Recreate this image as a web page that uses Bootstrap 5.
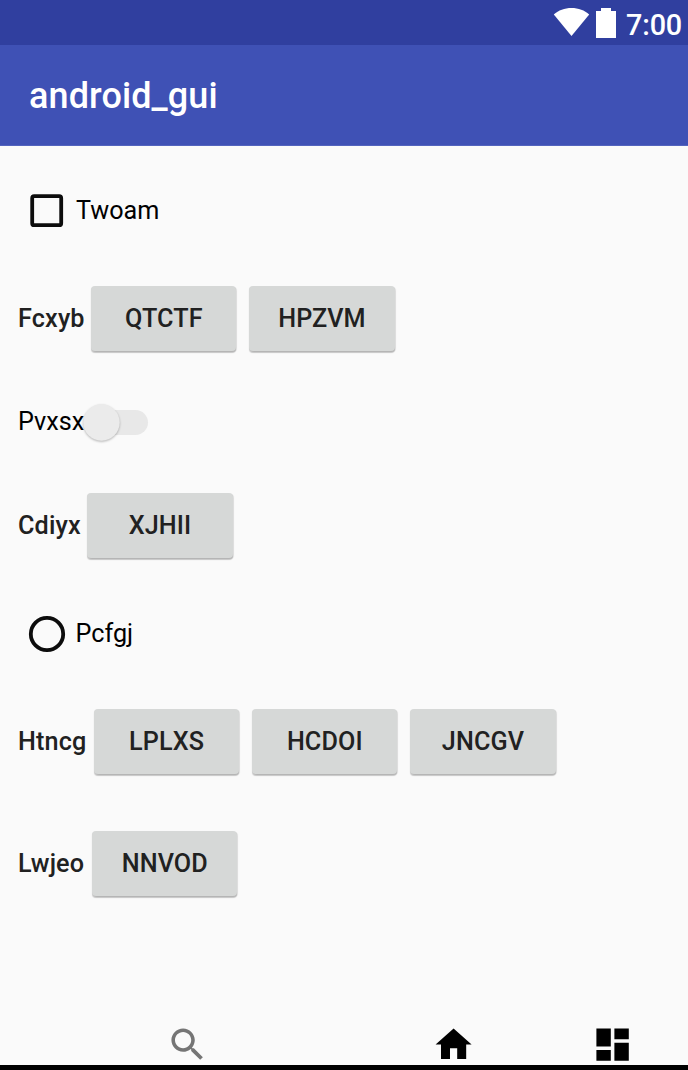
<!DOCTYPE html>
<html lang="en">
<head>
<meta charset="utf-8">
<meta name="viewport" content="width=device-width, initial-scale=1">
<title>android_gui</title>
<link rel="stylesheet" href="https://cdn.jsdelivr.net/npm/bootstrap@5.3.0/dist/css/bootstrap.min.css">
<style>
  body { font-family: Roboto, "Liberation Sans", sans-serif; font-size: 25.2px; line-height: 30px; background: #fafafa; color: #000; height: 1070px; overflow: hidden; }
  .status-bar { height: 45px; background: #303f9f; color: #fff; padding-right: 6px; font-size: 28.8px; font-weight: 500; }
  .clock { line-height: 34px; padding-top: 8px; margin-left: 10px; letter-spacing: -.2px; }
  .toolbar { height: 101px; background: #3f51b5; border-bottom: 1px solid #5364be; padding: 2px 0 0 29px; }
  .toolbar h1 { font-size: 36px; font-weight: 500; line-height: 42px; letter-spacing: .1px; color: #fff; }
  .form-row { padding-left: 18px; height: 88px; }
  .row-check { height: 129px; }
  .row-switch { height: 118px; }
  .row-single { height: 89px; }
  .row-single .btn-raised { padding-top: 1px; margin-bottom: 0; }
  .row-radio { height: 128px; }
  .row-last { margin-top: 34px; }
  .group-label { font-weight: 500; color: #212121; margin-right: 6.500px; letter-spacing: .15px; }
  .row-triple .group-label { margin-right: 7.500px; }
  .row-last .group-label { margin-right: 8px; }
  .btn-raised { width: 145.200px; height: 65px; padding: 0; border: 0; border-radius: 4px; background: #d6d8d7; color: #212121; font-family: inherit; font-size: 25.2px; font-weight: 500; line-height: 30px; letter-spacing: .1px; box-shadow: 0 1.500px 1px rgba(0,0,0,.2), 1px 1px 1px rgba(0,0,0,.1); margin: 0 13px 1px 0; }
  .btn-raised:hover { background: #cccece; color: #212121; }
  .switch-track { width: 65px; height: 37px; margin-left: -1px; }
  .bottom-bar { height: 43px; padding: .500px 0 0 166px; }
  .home-item { margin-left: 223px; }
  .board-item { margin-left: 115.300px; }
  .nav-edge { height: 5px; background: #000; }
  svg { display: block; flex: none; }
</style>
</head>
<body class="d-flex flex-column">
  <header>
    <div class="status-bar d-flex justify-content-end">
      <svg width="64" height="45" viewBox="0 0 64 45" fill="#fff"><path d="M19.500 36L1.800 14.500C6.500 10.200 12.500 8 19.500 8S32.500 10.200 37.200 14.500Z"/><path d="M49 8h10v3h5v27H44V11h5Z"/></svg>
      <span class="clock">7:00</span>
    </div>
    <div class="toolbar d-flex align-items-center"><h1 class="mb-0">android_gui</h1></div>
  </header>

  <main class="flex-grow-1">
    <label class="form-row row-check d-flex align-items-center">
      <svg width="58" height="44" viewBox="0 0 58 44"><rect x="14.200" y="7.200" width="29" height="29" rx="2" fill="none" stroke="#0c0c0c" stroke-width="3.800"/></svg>
      <span>Twoam</span>
    </label>
    <div class="form-row d-flex align-items-center">
      <span class="group-label">Fcxyb</span>
      <button type="button" class="btn btn-raised">QTCTF</button>
      <button type="button" class="btn btn-raised">HPZVM</button>
    </div>
    <label class="form-row row-switch d-flex align-items-center">
      <span>Pvxsx</span>
      <svg class="switch-track overflow-visible" viewBox="0 0 65 37"><rect x="12" y="6" width="53" height="25" rx="12.500" fill="#e8e8e8"/><circle cx="18.500" cy="18.500" r="18.200" fill="#ebebeb" style="filter:drop-shadow(0 1.500px 1px rgba(0,0,0,.28))"/></svg>
    </label>
    <div class="form-row row-single d-flex align-items-center">
      <span class="group-label">Cdiyx</span>
      <button type="button" class="btn btn-raised">XJHII</button>
    </div>
    <label class="form-row row-radio d-flex align-items-center">
      <svg width="57.500" height="44" viewBox="0 0 57.500 44"><circle cx="29" cy="22" r="16.200" fill="none" stroke="#0c0c0c" stroke-width="3.800"/></svg>
      <span>Pcfgj</span>
    </label>
    <div class="form-row row-triple d-flex align-items-center">
      <span class="group-label">Htncg</span>
      <button type="button" class="btn btn-raised">LPLXS</button>
      <button type="button" class="btn btn-raised">HCDOI</button>
      <button type="button" class="btn btn-raised">JNCGV</button>
    </div>
    <div class="form-row row-last d-flex align-items-center">
      <span class="group-label">Lwjeo</span>
      <button type="button" class="btn btn-raised">NNVOD</button>
    </div>
  </main>

  <nav class="bottom-bar d-flex" aria-label="Main">
    <svg width="43.200" height="43.200" viewBox="0 0 24 24" fill="#757575"><path d="M15.500 14h-.79l-.28-.27C15.410 12.590 16 11.110 16 9.500 16 5.910 13.090 3 9.500 3S3 5.910 3 9.500 5.910 16 9.500 16c1.610 0 3.090-.59 4.230-1.570l.27.28v.79l5 4.990L20.490 19l-4.990-5zm-6 0C7.010 14 5 11.990 5 9.500S7.010 5 9.500 5 14 7.010 14 9.500 11.990 14 9.500 14z"/></svg>
    <svg class="home-item" width="43.200" height="43.200" viewBox="0 0 24 24"><path d="M10 20v-6h4v6h5v-8h3L12 3 2 12h3v8z"/></svg>
    <svg class="board-item" width="43.200" height="43.200" viewBox="0 0 24 24"><path d="M3 13h8V3H3v10zm0 8h8v-6H3v6zm10 0h8V11h-8v10zm0-18v6h8V3h-8z"/></svg>
  </nav>
  <div class="nav-edge"></div>
<script src="https://cdn.jsdelivr.net/npm/bootstrap@5.3.0/dist/js/bootstrap.bundle.min.js"></script>
</body>
</html>
